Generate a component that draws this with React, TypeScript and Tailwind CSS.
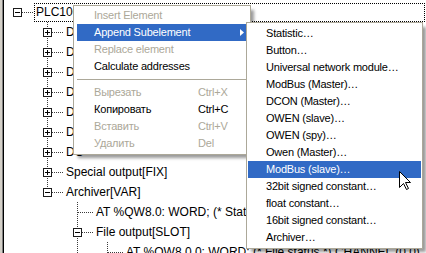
import React from 'react';

type Box = 'plus' | 'minus' | null;

type Row = {
  level: number;
  box: Box;
  text: string;
  guides: boolean[];
  last?: boolean;
  root?: boolean;
};

const rows: Row[] = [
  { level: 0, box: 'minus', text: 'PLC100[PLC]', guides: [], root: true },
  { level: 1, box: 'plus', text: 'DI[FIX]', guides: [false] },
  { level: 1, box: 'plus', text: 'DO[FIX]', guides: [false] },
  { level: 1, box: 'plus', text: 'DI counters[FIX]', guides: [false] },
  { level: 1, box: 'plus', text: 'DAC outputs[FIX]', guides: [false] },
  { level: 1, box: 'plus', text: 'DAC inputs[FIX]', guides: [false] },
  { level: 1, box: 'plus', text: 'Display[FIX]', guides: [false] },
  { level: 1, box: 'plus', text: 'DO', guides: [false] },
  { level: 1, box: 'plus', text: 'Special output[FIX]', guides: [false] },
  { level: 1, box: 'minus', text: 'Archiver[VAR]', guides: [false], last: true },
  { level: 2, box: null, text: 'AT %QW8.0: WORD; (* Status *)', guides: [false, false] },
  { level: 2, box: 'minus', text: 'File output[SLOT]', guides: [false, false] },
  {
    level: 3,
    box: null,
    text: 'AT %QW8.0.0: WORD; (* File status *) CHANNEL (0,0)',
    guides: [false, false, true],
    last: true,
  },
];

function Guide({ on }: { on: boolean }) {
  if (!on) return <div className="w-[30px] shrink-0" />;
  return (
    <svg width={30} height={20} className="block shrink-0">
      <line x1={13.5} y1={0} x2={13.5} y2={20} stroke="#3a3a3a" strokeDasharray="1 1" />
    </svg>
  );
}

function Connector({ box, last, root }: { box: Box; last?: boolean; root?: boolean }) {
  return (
    <svg width={30} height={20} className="block shrink-0">
      {!root && (
        <line x1={13.5} y1={0} x2={13.5} y2={last ? 11 : 20} stroke="#3a3a3a" strokeDasharray="1 1" />
      )}
      <line x1={box ? 18 : 14} y1={10.5} x2={30} y2={10.5} stroke="#3a3a3a" strokeDasharray="1 1" />
      {box && <rect x={9.5} y={6.5} width={8} height={8} fill="#fff" stroke="#1c1c1c" />}
      {box && <line x1={11} y1={10.5} x2={16} y2={10.5} stroke="#000" />}
      {box === 'plus' && <line x1={13.5} y1={8} x2={13.5} y2={13} stroke="#000" />}
    </svg>
  );
}

function TreeRow({ row }: { row: Row }) {
  return (
    <div className="flex h-[20px] items-center">
      {row.guides.map((g, i) => (
        <Guide key={i} on={g} />
      ))}
      <Connector box={row.box} last={row.last} root={row.root} />
      {row.root ? (
        <span className="mr-[1px] h-[19px] flex-1 whitespace-nowrap border border-dotted border-black pl-[1px] leading-[17px]">
          {row.text}
        </span>
      ) : (
        <span className="whitespace-nowrap pl-[2px] leading-[20px]">{row.text}</span>
      )}
    </div>
  );
}

type Item = { label: string; shortcut?: string; disabled?: boolean; active?: boolean; sub?: boolean };

const mainItems: (Item | 'sep')[] = [
  { label: 'Insert Element', disabled: true },
  { label: 'Append Subelement', active: true, sub: true },
  { label: 'Replace element', disabled: true },
  { label: 'Calculate addresses' },
  'sep',
  { label: 'Вырезать', shortcut: 'Ctrl+X', disabled: true },
  { label: 'Копировать', shortcut: 'Ctrl+C' },
  { label: 'Вставить', shortcut: 'Ctrl+V', disabled: true },
  { label: 'Удалить', shortcut: 'Del', disabled: true },
];

const subItems: Item[] = [
  { label: 'Statistic…' },
  { label: 'Button…' },
  { label: 'Universal network module…' },
  { label: 'ModBus (Master)…' },
  { label: 'DCON (Master)…' },
  { label: 'OWEN (slave)…' },
  { label: 'OWEN (spy)…' },
  { label: 'Owen (Master)…' },
  { label: 'ModBus (slave)…', active: true },
  { label: '32bit signed constant…' },
  { label: 'float constant…' },
  { label: '16bit signed constant…' },
  { label: 'Archiver…' },
];

function itemColor(it: Item) {
  if (it.active) return 'bg-[#316ac5] text-white';
  if (it.disabled) return 'text-[#aca899]';
  return 'text-black';
}

function MainMenu() {
  return (
    <div className="absolute left-[73px] top-[5px] w-[178px] border border-[#aca899] bg-white px-[3px] pt-[1px] pb-[2px] shadow-[4px_4px_3px_-1px_rgba(0,0,0,0.4)]">
      {mainItems.map((it, i) =>
        it === 'sep' ? (
          <div key={i} className="flex h-[9px] items-center">
            <div className="h-px w-full bg-[#aca899]" />
          </div>
        ) : (
          <div key={i} className={`flex h-[17px] items-center pl-[17px] ${itemColor(it)}`}>
            <span className="w-[104px] whitespace-nowrap">{it.label}</span>
            {it.shortcut && <span className="whitespace-nowrap">{it.shortcut}</span>}
            {it.sub && (
              <svg width={4} height={7} className="ml-auto mr-[3px] block">
                <path d="M0 0 L4 3.5 L0 7 Z" fill="#fff" />
              </svg>
            )}
          </div>
        ),
      )}
    </div>
  );
}

function SubMenu() {
  return (
    <div className="absolute left-[246px] top-[22px] w-[177px] border border-[#aca899] bg-white px-[1px] py-[2px] shadow-[4px_4px_3px_-1px_rgba(0,0,0,0.4)]">
      {subItems.map((it, i) => (
        <div key={i} className={`flex h-[17px] items-center whitespace-nowrap pl-[18px] ${itemColor(it)}`}>
          {it.label}
        </div>
      ))}
    </div>
  );
}

function Cursor() {
  return (
    <svg width={14} height={22} className="absolute left-[398px] top-[170px]">
      <path
        d="M1.5 1.5 L1.5 17.5 L5.5 13.5 L8.5 19.5 L10.5 18.5 L7.5 12.5 L12.5 12.5 Z"
        fill="#fff"
        stroke="#000"
        strokeLinejoin="miter"
      />
    </svg>
  );
}

export default function App() {
  return (
    <div className="relative h-[253px] w-[426px] overflow-hidden bg-[#d4d0c8] pl-[2px] font-['Liberation_Sans',Arial,sans-serif]">
      <div className="h-full border-l border-[#808080]">
        <div className="h-full overflow-hidden border-l border-black bg-white pt-[2px] text-[12px] text-black">
          {rows.map((r, i) => (
            <TreeRow key={i} row={r} />
          ))}
        </div>
      </div>
      <div className="text-[11px] tracking-[-0.2px]">
        <MainMenu />
        <SubMenu />
      </div>
      <Cursor />
    </div>
  );
}
